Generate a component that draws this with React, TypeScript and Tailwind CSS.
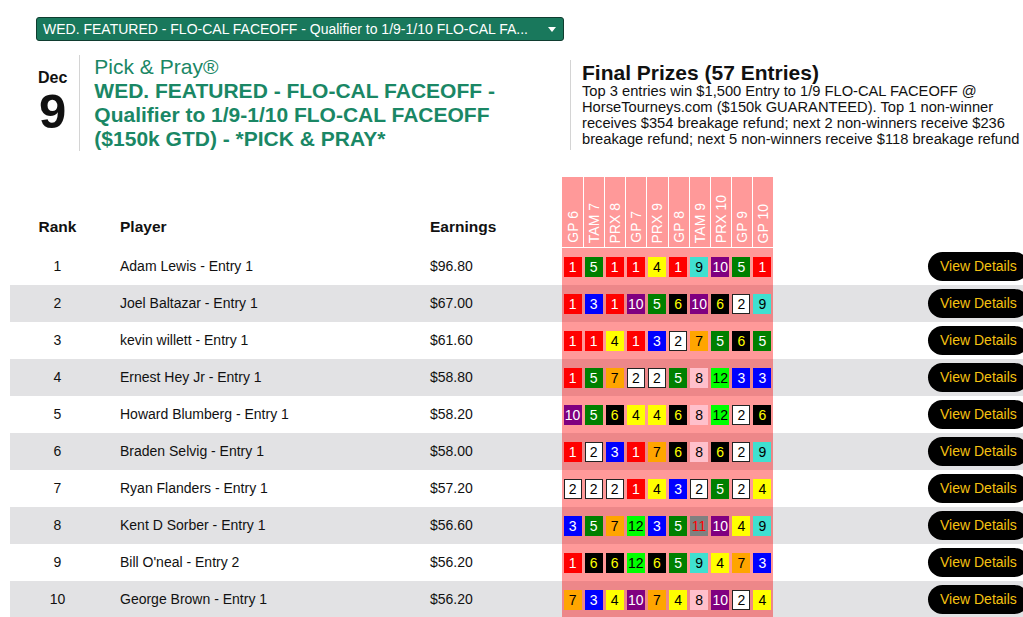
import React from "react";

const SADDLE: Record<number, string> = {
  1: "bg-[#ff0000] text-white",
  2: "bg-white text-black border-[1.5px] border-[#222]",
  3: "bg-[#0000ff] text-white",
  4: "bg-[#ffff00] text-black",
  5: "bg-[#008000] text-white",
  6: "bg-black text-[#ffff00]",
  7: "bg-[#ffa500] text-black",
  8: "bg-[#ffc0cb] text-black",
  9: "bg-[#40e0d0] text-black",
  10: "bg-[#800080] text-white",
  11: "bg-[#808080] text-[#ff0000]",
  12: "bg-[#00ff00] text-black",
};

const RACES = ["GP 6", "TAM 7", "PRX 8", "GP 7", "PRX 9", "GP 8", "TAM 9", "PRX 10", "GP 9", "GP 10"];

const ROWS = [
  { rank: 1, player: "Adam Lewis - Entry 1", earnings: "$96.80", picks: [1, 5, 1, 1, 4, 1, 9, 10, 5, 1] },
  { rank: 2, player: "Joel Baltazar - Entry 1", earnings: "$67.00", picks: [1, 3, 1, 10, 5, 6, 10, 6, 2, 9] },
  { rank: 3, player: "kevin willett - Entry 1", earnings: "$61.60", picks: [1, 1, 4, 1, 3, 2, 7, 5, 6, 5] },
  { rank: 4, player: "Ernest Hey Jr - Entry 1", earnings: "$58.80", picks: [1, 5, 7, 2, 2, 5, 8, 12, 3, 3] },
  { rank: 5, player: "Howard Blumberg - Entry 1", earnings: "$58.20", picks: [10, 5, 6, 4, 4, 6, 8, 12, 2, 6] },
  { rank: 6, player: "Braden Selvig - Entry 1", earnings: "$58.00", picks: [1, 2, 3, 1, 7, 6, 8, 6, 2, 9] },
  { rank: 7, player: "Ryan Flanders - Entry 1", earnings: "$57.20", picks: [2, 2, 2, 1, 4, 3, 2, 5, 2, 4] },
  { rank: 8, player: "Kent D Sorber - Entry 1", earnings: "$56.60", picks: [3, 5, 7, 12, 3, 5, 11, 10, 4, 9] },
  { rank: 9, player: "Bill O'neal - Entry 2", earnings: "$56.20", picks: [1, 6, 6, 12, 6, 5, 9, 4, 7, 3] },
  { rank: 10, player: "George Brown - Entry 1", earnings: "$56.20", picks: [7, 3, 4, 10, 7, 4, 8, 10, 2, 4] },
];

function Saddle({ n }: { n: number }) {
  return (
    <div className={`flex h-[20px] w-[18px] items-center justify-center text-[14px] leading-none ${SADDLE[n]}`}>
      {n}
    </div>
  );
}

export default function App() {
  return (
    <div className="flex h-[617px] w-[1023px] flex-col overflow-hidden bg-white font-['Liberation_Sans',Arial,sans-serif] text-[#111]">
      {/* tournament picker */}
      <div className="ml-[36px] mt-[17px] flex h-[24px] w-[528px] shrink-0 items-center justify-between rounded-[3px] border border-[#103d30] bg-[#19785c] pl-[6px] pr-[7px] text-[14px] text-white">
        <span className="whitespace-nowrap">WED. FEATURED - FLO-CAL FACEOFF - Qualifier to 1/9-1/10 FLO-CAL FA...</span>
        <svg width="8" height="5" viewBox="0 0 8 5">
          <path d="M0 0H8L4 5Z" fill="white" />
        </svg>
      </div>

      {/* header */}
      <div className="mt-[14px] flex shrink-0 items-start">
        <div className="ml-[36px] flex w-[534px] shrink-0">
          <div className="flex flex-col items-center justify-center border-r border-[#d4d4d4] pl-[2px] pr-[12px] pb-[6px]">
            <span className="text-[16px] font-bold leading-[18px]">Dec</span>
            <span className="mt-[3px] text-[49px] font-bold leading-[42px]">9</span>
          </div>
          <div className="w-[440px] pl-[14px] text-[21px] leading-[24px] text-[#1a8765]">
            <div>Pick &amp; Pray®</div>
            <div className="font-bold">WED. FEATURED - FLO-CAL FACEOFF - Qualifier to 1/9-1/10 FLO-CAL FACEOFF ($150k GTD) - *PICK &amp; PRAY*</div>
          </div>
        </div>
        <div className="mt-[5px] w-[464px] shrink-0 border-l border-[#d4d4d4] pb-[3px] pl-[11px] pt-[3px]">
          <div className="text-[21px] font-bold leading-[19px]">Final Prizes (57 Entries)</div>
          <div className="mt-[1px] w-[452px] text-[14.7px] leading-[16px]">
            Top 3 entries win $1,500 Entry to 1/9 FLO-CAL FACEOFF @ HorseTourneys.com ($150k GUARANTEED). Top 1 non-winner receives $354 breakage refund; next 2 non-winners receive $236 breakage refund; next 5 non-winners receive $118 breakage refund
          </div>
        </div>
      </div>

      {/* leaderboard */}
      <div className="ml-[10px] mt-[26px] w-[1040px] shrink-0">
        <div className="grid h-[71px] grid-cols-[95px_310px_147px_211px_1fr] text-[15.5px] font-bold">
          <div className="flex items-end justify-center pb-[10px]">Rank</div>
          <div className="flex items-end pb-[10px] pl-[15px]">Player</div>
          <div className="flex items-end pb-[10px] pl-[15px]">Earnings</div>
          <div className="grid grid-cols-10 border-b border-white">
            {RACES.map((r, i) => (
              <div
                key={r}
                className={`flex items-end justify-center bg-[#ff9999] pb-[4px] ${i > 0 ? "border-l border-white" : ""}`}
              >
                <span className="rotate-180 whitespace-nowrap text-[14px] font-normal leading-none text-white [writing-mode:vertical-rl]">
                  {r}
                </span>
              </div>
            ))}
          </div>
          <div />
        </div>

        {ROWS.map((row, idx) => (
          <div
            key={row.rank}
            className={`grid h-[37px] grid-cols-[95px_310px_147px_211px_1fr] text-[14px] ${idx % 2 === 1 ? "bg-[#e2e2e4]" : "bg-white"}`}
          >
            <div className="flex items-center justify-center">{row.rank}</div>
            <div className="flex items-center pl-[15px]">{row.player}</div>
            <div className="flex items-center pl-[15px]">{row.earnings}</div>
            <div className="grid grid-cols-10 bg-[rgba(255,0,0,0.4)]">
              {row.picks.map((p, i) => (
                <div key={i} className="flex items-center justify-center">
                  <Saddle n={p} />
                </div>
              ))}
            </div>
            <div className="flex items-center pl-[155px]">
              <button
                type="button"
                className="h-[29px] whitespace-nowrap rounded-full bg-black px-[12px] text-[14px] text-[#f5c211]"
              >
                View Details
              </button>
            </div>
          </div>
        ))}
      </div>
    </div>
  );
}
